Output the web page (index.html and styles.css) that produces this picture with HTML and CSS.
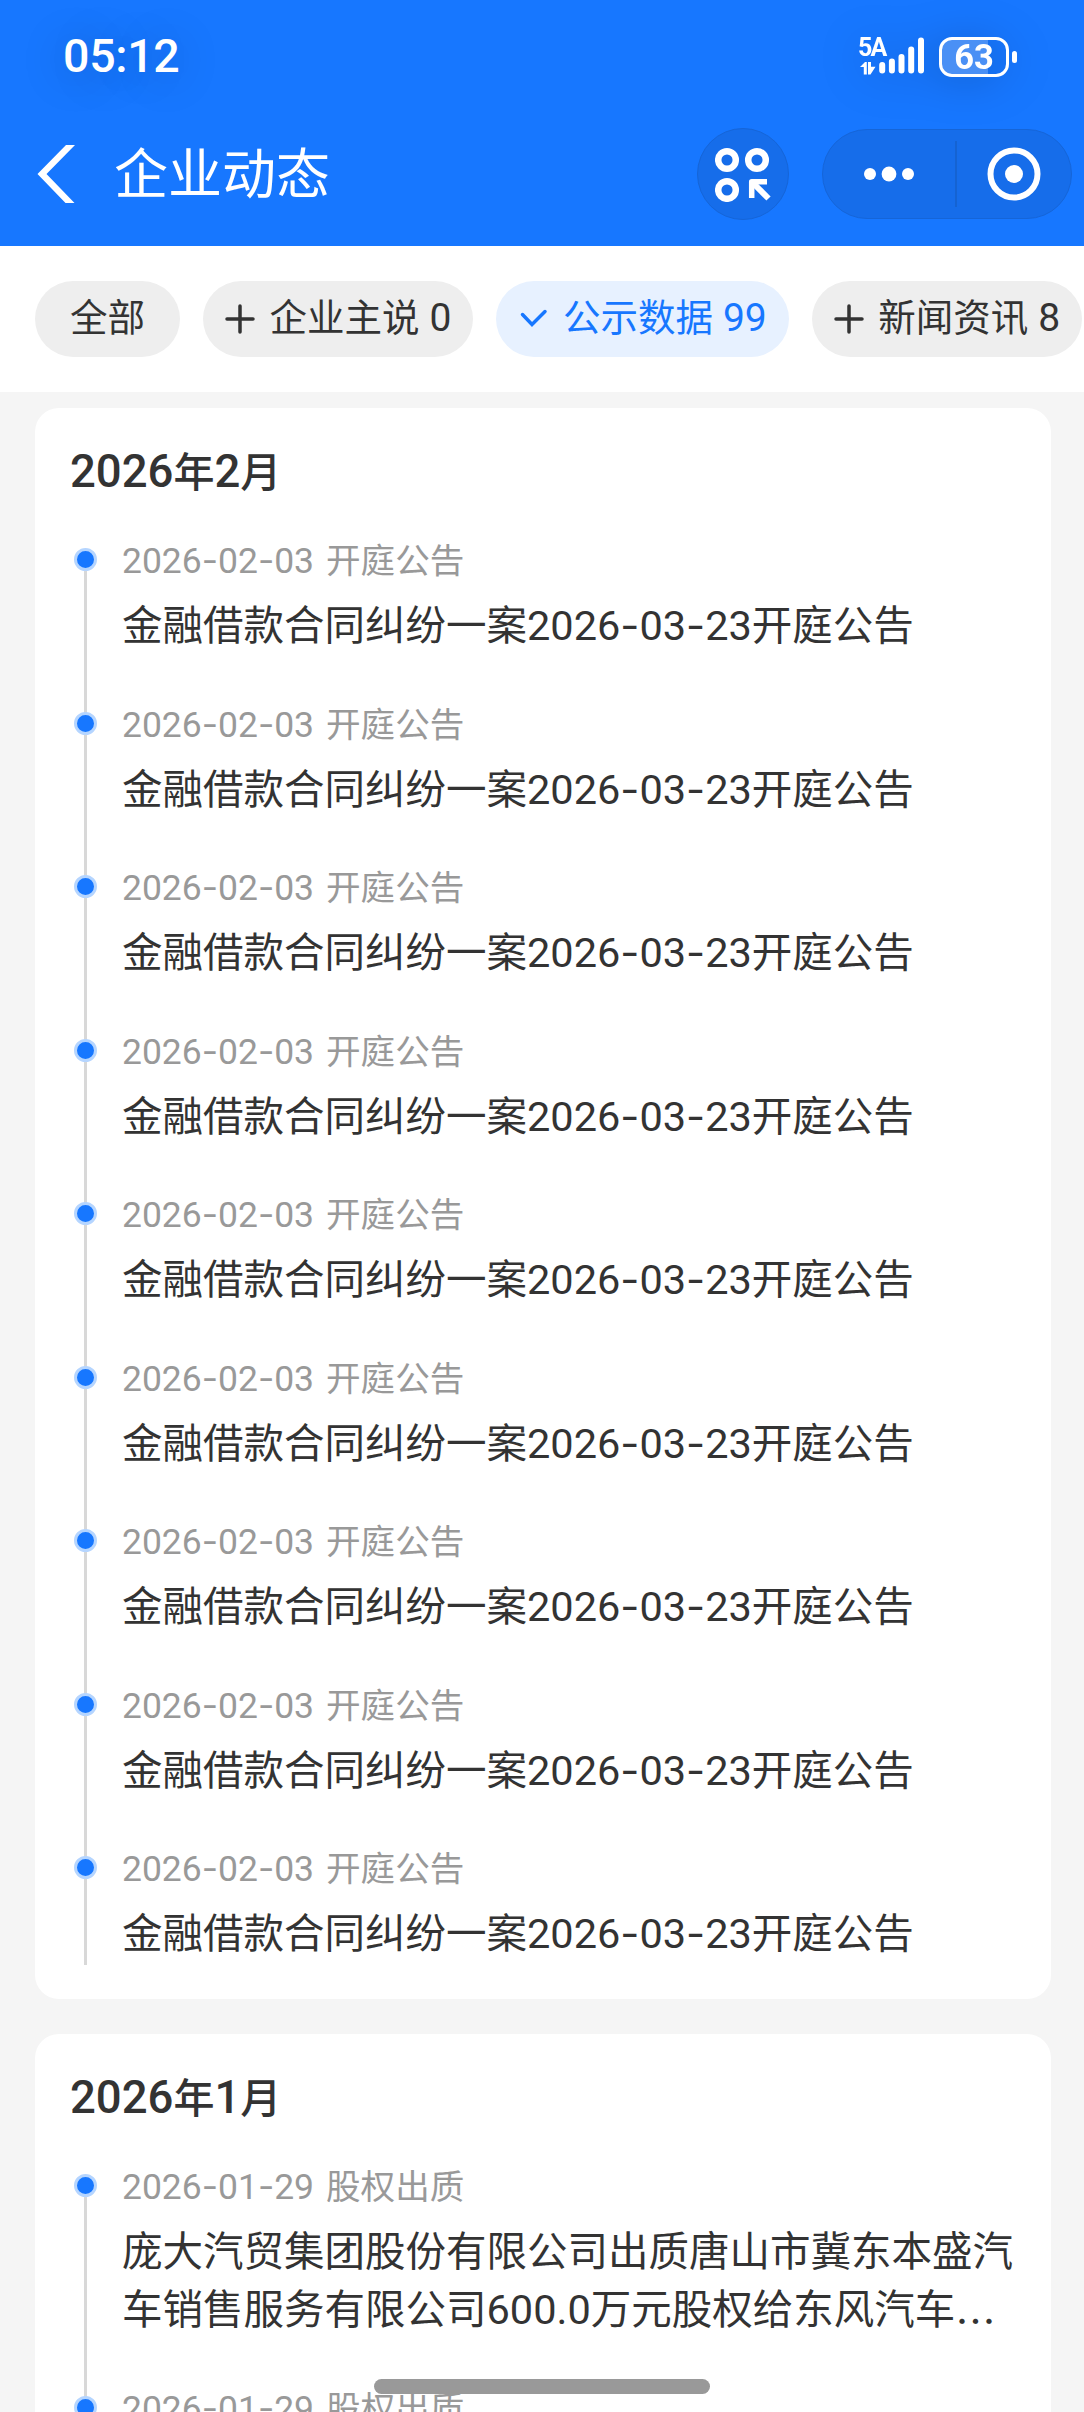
FILE: index.html
```
<!DOCTYPE html>
<html lang="zh-CN">
<head>
    <meta charset="UTF-8">
    <meta name="viewport" content="width=device-width, initial-scale=1.0">
    <title>企业动态</title>
    <link rel="stylesheet" href="styles.css">
</head>
<body>

    <!-- Header -->
    <header class="header">
        <div class="status-bar">
            <span class="time">05:12</span>
            <div class="status-icons">
                <div class="network">
                    <span class="network-type">5A</span>
                    <svg class="updown" width="16" height="13" viewBox="0 0 16 13">
                        <path d="M0 5 5 0h1.800v12.500H3.800V5zM8 0h3v4.800h4.500L10.500 12.500H8z" fill="#fff"/>
                    </svg>
                </div>
                <svg class="signal" width="46" height="37" viewBox="0 0 46 37" stroke="#fff" stroke-width="6" stroke-linecap="round">
                    <path d="M3.200 28v5.500M12.900 24.500v9M22.500 20v13.500M32.200 12.500v21M42 3.500v30"/>
                </svg>
                <div class="battery"><span>63</span></div>
                <div class="battery-tip"></div>
            </div>
        </div>
        <div class="nav-bar">
            <svg class="back" width="40" height="58" viewBox="0 0 40 58">
                <path d="M29 0H38L9.500 29 37.500 58H28.500L0.500 29z" fill="#fff"/>
            </svg>
            <h1>企业动态</h1>
            <div class="scan-button">
                <svg width="56" height="56" viewBox="0 0 56 56" fill="none" stroke="#fff" stroke-width="6.500">
                    <circle cx="12" cy="14" r="8.800"/>
                    <circle cx="42" cy="14" r="8.800"/>
                    <circle cx="12" cy="44" r="8.800"/>
                    <path d="M52 35.700H36.700V52" stroke-width="5.500" stroke-linejoin="round"/>
                    <path d="M38 37 53.500 52.500" stroke-width="6"/>
                </svg>
            </div>
            <div class="capsule">
                <div class="capsule-item">
                    <svg width="50" height="16" viewBox="0 0 50 16" fill="#fff">
                        <circle cx="6" cy="8" r="6"/>
                        <circle cx="25" cy="8" r="7.400"/>
                        <circle cx="44" cy="8" r="6"/>
                    </svg>
                </div>
                <div class="divider"></div>
                <div class="capsule-item">
                    <svg width="54" height="54" viewBox="0 0 54 54">
                        <circle cx="27" cy="27" r="23.500" fill="none" stroke="#fff" stroke-width="6"/>
                        <circle cx="27" cy="27" r="9" fill="#fff"/>
                    </svg>
                </div>
            </div>
        </div>
    </header>

    <!-- Filter chips -->
    <nav class="filters">
        <div class="chip chip-all"><span>全部</span></div>
        <div class="chip">
            <svg width="30" height="30" viewBox="0 0 30 30"><path d="M15 2v26M2 15h26"/></svg>
            <span>企业主说</span><span class="num">0</span>
        </div>
        <div class="chip active">
            <svg width="30" height="30" viewBox="0 0 30 30"><path d="M4.500 10.500 14 20.500 27 7.500"/></svg>
            <span>公示数据</span><span class="num">99</span>
        </div>
        <div class="chip">
            <svg width="30" height="30" viewBox="0 0 30 30"><path d="M15 2v26M2 15h26"/></svg>
            <span>新闻资讯</span><span class="num">8</span>
        </div>
    </nav>

    <!-- Timeline -->
    <main class="content">
        <section class="card">
            <h2><span class="num">2026</span>年<span class="num">2</span>月</h2>
            <ul class="timeline">
                <li>
                    <div class="meta"><span class="num">2026<i>-</i>02<i>-</i>03</span>开庭公告</div>
                    <div class="title">金融借款合同纠纷一案<span class="num">2026<i>-</i>03<i>-</i>23</span>开庭公告</div>
                </li>
                <li>
                    <div class="meta"><span class="num">2026<i>-</i>02<i>-</i>03</span>开庭公告</div>
                    <div class="title">金融借款合同纠纷一案<span class="num">2026<i>-</i>03<i>-</i>23</span>开庭公告</div>
                </li>
                <li>
                    <div class="meta"><span class="num">2026<i>-</i>02<i>-</i>03</span>开庭公告</div>
                    <div class="title">金融借款合同纠纷一案<span class="num">2026<i>-</i>03<i>-</i>23</span>开庭公告</div>
                </li>
                <li>
                    <div class="meta"><span class="num">2026<i>-</i>02<i>-</i>03</span>开庭公告</div>
                    <div class="title">金融借款合同纠纷一案<span class="num">2026<i>-</i>03<i>-</i>23</span>开庭公告</div>
                </li>
                <li>
                    <div class="meta"><span class="num">2026<i>-</i>02<i>-</i>03</span>开庭公告</div>
                    <div class="title">金融借款合同纠纷一案<span class="num">2026<i>-</i>03<i>-</i>23</span>开庭公告</div>
                </li>
                <li>
                    <div class="meta"><span class="num">2026<i>-</i>02<i>-</i>03</span>开庭公告</div>
                    <div class="title">金融借款合同纠纷一案<span class="num">2026<i>-</i>03<i>-</i>23</span>开庭公告</div>
                </li>
                <li>
                    <div class="meta"><span class="num">2026<i>-</i>02<i>-</i>03</span>开庭公告</div>
                    <div class="title">金融借款合同纠纷一案<span class="num">2026<i>-</i>03<i>-</i>23</span>开庭公告</div>
                </li>
                <li>
                    <div class="meta"><span class="num">2026<i>-</i>02<i>-</i>03</span>开庭公告</div>
                    <div class="title">金融借款合同纠纷一案<span class="num">2026<i>-</i>03<i>-</i>23</span>开庭公告</div>
                </li>
                <li>
                    <div class="meta"><span class="num">2026<i>-</i>02<i>-</i>03</span>开庭公告</div>
                    <div class="title">金融借款合同纠纷一案<span class="num">2026<i>-</i>03<i>-</i>23</span>开庭公告</div>
                </li>
            </ul>
        </section>

        <section class="card">
            <h2><span class="num">2026</span>年<span class="num">1</span>月</h2>
            <ul class="timeline">
                <li>
                    <div class="meta"><span class="num">2026<i>-</i>01<i>-</i>29</span>股权出质</div>
                    <div class="title">庞大汽贸集团股份有限公司出质唐山市冀东本盛汽车销售服务有限公司<span class="num">600.0</span>万元股权给东风汽车<span class="more">…</span></div>
                </li>
                <li>
                    <div class="meta"><span class="num">2026<i>-</i>01<i>-</i>29</span>股权出质</div>
                </li>
            </ul>
        </section>
    </main>

    <div class="home-indicator"></div>

</body>
</html>
```

FILE: styles.css
```
*,
*::before,
*::after {
    box-sizing: border-box;
}

body {
    margin: 0;
    height: 2412px;
    overflow: hidden;
    display: flex;
    flex-direction: column;
    background: #f5f5f5;
    color: #333;
    font-family: "Noto Sans CJK SC", sans-serif;
}

/* Header */
.header {
    flex: none;
    height: 246px;
    background: #1777ff;
    color: #fff;
}

.status-bar {
    display: flex;
    justify-content: space-between;
    height: 110px;
    padding: 0 67px 0 63px;
}

.time {
    margin-top: 29px;
    font: 500 46.500px/54px Roboto, sans-serif;
    letter-spacing: -0.3px;
    text-shadow: 0 4px 45px rgba(0, 0, 0, 0.3);
}

.status-icons {
    display: flex;
    align-items: flex-start;
    padding-top: 37px;
    filter: drop-shadow(0 4px 22px rgba(0, 0, 0, 0.18));
}

.network {
    width: 20px;
    display: flex;
    flex-direction: column;
}

.network-type {
    margin: 1px 0 0 -1px;
    font: 700 25px/20px Roboto, sans-serif;
    letter-spacing: -1.8px;
    white-space: nowrap;
}

.updown {
    margin: 4px 0 0 1px;
}

.signal {
    margin: 0 14px 0 0;
}

.battery {
    width: 70px;
    height: 40px;
    border: 3px solid #fff;
    border-radius: 13px;
    background: linear-gradient(to right, #4a90f5 46px, transparent 46px);
    text-align: center;
    font: 700 34.500px/35px Roboto, sans-serif;
}

.battery-tip {
    width: 5px;
    height: 12px;
    margin: 14px 0 0 3px;
    border-radius: 3px;
    background: #fff;
}

.nav-bar {
    display: flex;
    align-items: center;
    height: 128px;
    padding: 0 12px 0 37px;
}

h1 {
    flex: 1;
    margin: 0 0 7px 37px;
    font-size: 54px;
    line-height: 80px;
    font-weight: 400;
}

.scan-button {
    display: flex;
    align-items: center;
    justify-content: center;
    width: 92px;
    height: 92px;
    margin-right: 33px;
    border: 1px solid #1565d8;
    border-radius: 50%;
    background: #166dea;
}

.capsule {
    display: flex;
    align-items: center;
    width: 250px;
    height: 90px;
    border: 1px solid #1565d8;
    border-radius: 45px;
    background: #166dea;
}

.capsule-item {
    flex: 1;
    display: flex;
    align-items: center;
    justify-content: center;
}

.capsule-item:first-child {
    flex: 0 0 132px;
}

.divider {
    width: 2px;
    height: 66px;
    background: #1563d2;
}

/* Filter chips */
.filters {
    flex: none;
    display: flex;
    gap: 23px;
    height: 146px;
    padding: 35px 0 0 35px;
    background: #fff;
}

.chip {
    flex: none;
    display: flex;
    align-items: center;
    height: 76px;
    padding: 0 22px;
    border-radius: 38px;
    background: #eee;
    font-size: 37.5px;
    line-height: 60px;
    white-space: nowrap;
}

.chip span {
    margin-bottom: 8px;
}

.chip svg {
    margin-right: 14.5px;
    fill: none;
    stroke: #333;
    stroke-width: 3.500;
    stroke-linecap: round;
}

.chip .num {
    margin: 0 0 2px 10px;
    font-size: 39px;
}

.chip-all {
    padding: 0 35px;
}

.chip.active {
    background: #e7f1ff;
    color: #1777ff;
}

.chip.active svg {
    stroke: #1777ff;
}

/* Digits run a little larger than the Chinese text */
.num {
    font-family: Roboto, sans-serif;
    font-size: 1.025em;
    line-height: 1;
}

.num i {
    font-family: Inter, sans-serif;
    font-style: normal;
}

/* Timeline cards */
.content {
    display: flex;
    flex-direction: column;
    gap: 35px;
    padding: 16px 33px 0 35px;
}

.card {
    flex: none;
    padding: 29px 36px 34px 35px;
    border-radius: 24px;
    background: #fff;
}

h2 {
    margin: 0 0 34px;
    font-size: 41px;
    line-height: 64px;
    font-weight: 500;
}

h2 .num {
    font-size: 45.5px;
}

.timeline {
    margin: 0;
    padding: 0;
    list-style: none;
}

.timeline li {
    position: relative;
    height: 163.5px;
    padding-left: 52px;
}

.timeline li:last-child {
    height: 122px;
}

.timeline li:not(:last-child):has(.more) {
    height: 221.5px;
}

/* Vertical line */
.timeline li::before {
    content: "";
    position: absolute;
    left: 14px;
    top: 25px;
    bottom: -25px;
    width: 3px;
    background: #d8d8d8;
}

.timeline li:last-child::before {
    bottom: 0;
}

/* Dot */
.timeline li::after {
    content: "";
    position: absolute;
    z-index: 1;
    left: 4px;
    top: 13px;
    width: 23px;
    height: 23px;
    border: 3px solid #b5d5ff;
    border-radius: 50%;
    background: #1777ff;
}

.meta {
    height: 59px;
    font-size: 34.6px;
    line-height: 47px;
    color: #999;
}

.meta .num {
    margin-right: 12px;
}

.title {
    font-size: 40.5px;
    line-height: 58px;
}

.more {
    line-height: 0;
    vertical-align: -13px;
}

.home-indicator {
    position: fixed;
    z-index: 2;
    left: 374px;
    top: 2379px;
    width: 336px;
    height: 15px;
    border-radius: 8px;
    background: #999;
}
```
